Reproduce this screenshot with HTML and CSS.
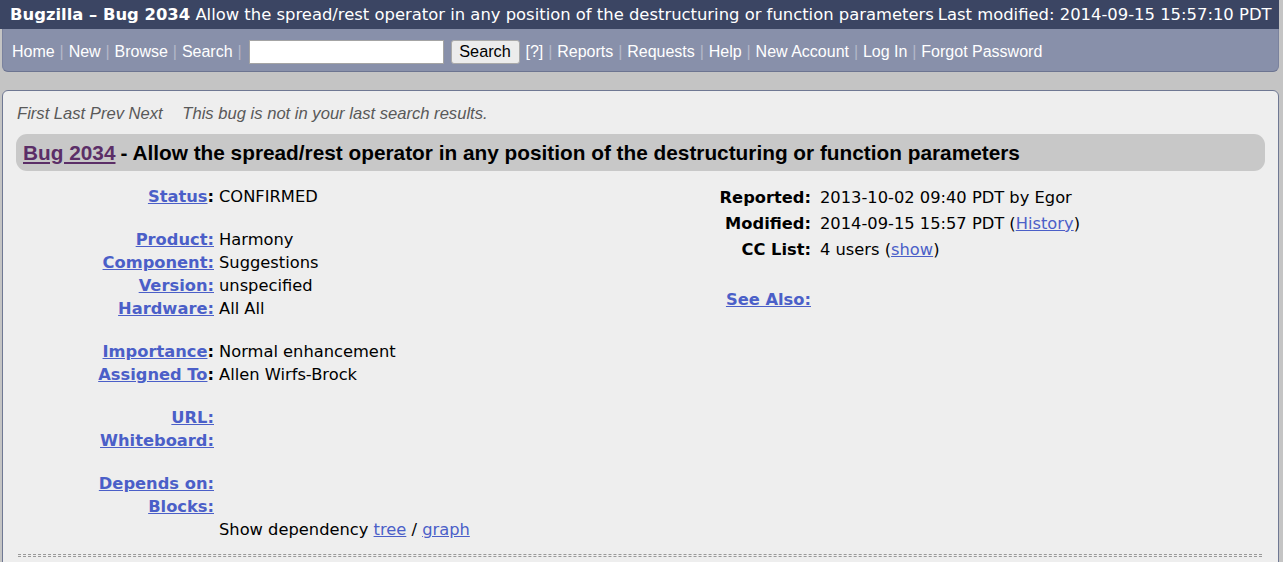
FILE: index.html
```html
<!DOCTYPE html>
<html>
<head>
<meta charset="utf-8">
<title>Bug 2034</title>
<link rel="stylesheet" href="styles.css">
</head>
<body>
<div class="page">
  <div class="topbar">
    <span class="tb-title"><b>Bugzilla – Bug 2034</b> Allow the spread/rest operator in any position of the destructuring or function parameters</span>
    <span class="tb-mod">Last modified: 2014-09-15 15:57:10 PDT</span>
  </div>
  <div class="navbar">
    <a href="#">Home</a><span class="sep">|</span><a href="#">New</a><span class="sep">|</span><a href="#">Browse</a><span class="sep">|</span><a href="#">Search</a><span class="sep">|</span>
    <input class="q" type="text">
    <button class="btn">Search</button>
    <a href="#" class="help">[?]</a><span class="sep">|</span><a href="#">Reports</a><span class="sep">|</span><a href="#">Requests</a><span class="sep">|</span><a href="#">Help</a><span class="sep">|</span><a href="#">New Account</a><span class="sep">|</span><a href="#">Log In</a><span class="sep">|</span><a href="#">Forgot Password</a>
  </div>
  <div class="main">
    <div class="navline">First Last Prev Next <span class="notin">This bug is not in your last search results.</span></div>
    <div class="titlebar"><a href="#" class="buglink">Bug 2034</a> - Allow the spread/rest operator in any position of the destructuring or function parameters</div>
    <div class="fields">
      <div class="leftf">
        <div class="row"><span class="lbl"><a href="#">Status</a>:</span><span class="val">CONFIRMED</span></div>
        <div class="spacer"></div>
        <div class="row"><span class="lbl"><a href="#">Product:</a></span><span class="val">Harmony</span></div>
        <div class="row"><span class="lbl"><a href="#">Component:</a></span><span class="val">Suggestions</span></div>
        <div class="row"><span class="lbl"><a href="#">Version:</a></span><span class="val">unspecified</span></div>
        <div class="row"><span class="lbl"><a href="#">Hardware:</a></span><span class="val">All All</span></div>
        <div class="spacer"></div>
        <div class="row"><span class="lbl"><a href="#">Importance</a>:</span><span class="val">Normal enhancement</span></div>
        <div class="row"><span class="lbl"><a href="#">Assigned To</a>:</span><span class="val">Allen Wirfs-Brock</span></div>
        <div class="spacer"></div>
        <div class="row"><span class="lbl"><a href="#">URL:</a></span><span class="val"></span></div>
        <div class="row"><span class="lbl"><a href="#">Whiteboard:</a></span><span class="val"></span></div>
        <div class="spacer"></div>
        <div class="row"><span class="lbl"><a href="#">Depends on:</a></span><span class="val"></span></div>
        <div class="row"><span class="lbl"><a href="#">Blocks:</a></span><span class="val"></span></div>
        <div class="row"><span class="lbl"></span><span class="val">Show dependency <a href="#" class="plain">tree</a> / <a href="#" class="plain">graph</a></span></div>
      </div>
      <div class="rightf">
        <div class="rrow"><span class="rlbl">Reported:</span><span class="rval">2013-10-02 09:40 PDT by Egor</span></div>
        <div class="rrow"><span class="rlbl">Modified:</span><span class="rval">2014-09-15 15:57 PDT (<a href="#" class="plain">History</a>)</span></div>
        <div class="rrow"><span class="rlbl">CC List:</span><span class="rval">4 users (<a href="#" class="plain">show</a>)</span></div>
        <div class="rspacer"></div>
        <div class="rrow"><span class="rlbl"><a href="#">See Also:</a></span><span class="rval"></span></div>
      </div>
    </div>
    <div class="dashline"></div>
  </div>
</div>
</body>
</html>
```

FILE: styles.css
```css
html, body {
  margin: 0;
  padding: 0;
  background: #c4c4c4;
  height: 100%;
  overflow: hidden;
}
.page {
  margin-right: 4px;
}
.topbar {
  background: #3b4563;
  color: #fff;
  height: 29px;
  display: flex;
  align-items: center;
  gap: 4px;
  padding: 0 0 0 10px;
  font-family: "DejaVu Sans", Verdana, sans-serif;
  font-size: 16.4px;
  white-space: nowrap;
  overflow: hidden;
}
.tb-title b {
  font-weight: bold;
}
.navbar {
  margin-left: 2px;
  background: #8890aa;
  border-bottom: 1px solid #6c7490;
  border-left: 1px solid #7a829e;
  border-right: 1px solid #7a829e;
  border-radius: 0 0 6px 6px;
  height: 43px;
  box-sizing: border-box;
  padding-top: 3px;
  display: flex;
  align-items: center;
  padding-left: 9px;
  font-family: "Liberation Sans", Arial, sans-serif;
  font-size: 16px;
  white-space: nowrap;
}
.navbar a {
  color: #fff;
  text-decoration: none;
}
.navbar .sep {
  color: #b3b8c9;
  padding: 0 4.9px;
}
.navbar .q {
  width: 195px;
  height: 24px;
  box-sizing: border-box;
  border: 1px solid #a4a4a4;
  background: #fff;
  margin: 0 3px 0 2px;
  padding: 0;
}
.navbar .btn {
  height: 24px;
  width: 69px;
  box-sizing: border-box;
  border: 1px solid #a9a9a9;
  border-radius: 3px;
  background: #ececec;
  font-family: "Liberation Sans", Arial, sans-serif;
  font-size: 16.3px;
  color: #000;
  margin: 0 6px 0 4px;
  padding: 0;
}
.main {
  margin-top: 18px;
  margin-left: 2px;
  background: #eeeeee;
  border: 1px solid #6f7893;
  border-radius: 6px 6px 0 0;
  padding: 13px 13px 0 13px;
  min-height: 600px;
}
.navline {
  font-family: "Liberation Sans", Arial, sans-serif;
  font-style: italic;
  font-size: 16.6px;
  line-height: 20px;
  color: #595959;
  padding-left: 1px;
}
.navline .notin {
  margin-left: 15px;
}
.titlebar {
  margin-top: 10px;
  background: #c8c8c8;
  border-radius: 11px;
  height: 37px;
  display: flex;
  align-items: center;
  padding-left: 7px;
  font-family: "Liberation Sans", Arial, sans-serif;
  font-weight: bold;
  font-size: 20.8px;
  color: #000;
  white-space: nowrap;
}
.titlebar .buglink {
  color: #5b2e67;
  text-decoration: underline;
  margin-right: 5px;
}
.fields {
  margin-top: 14px;
  display: flex;
  font-family: "DejaVu Sans", Verdana, sans-serif;
  font-size: 16.3px;
  color: #000;
}
.leftf {
  width: 683px;
}
.row {
  display: flex;
  height: 23px;
  line-height: 23px;
  white-space: nowrap;
}
.lbl {
  width: 198px;
  text-align: right;
  font-weight: bold;
}
.val {
  padding-left: 5px;
}
.spacer {
  height: 20px;
}
a {
  color: #4b5fc8;
  text-decoration: underline;
}
.rightf {
  flex: 1;
}
.rrow {
  display: flex;
  height: 26px;
  line-height: 26px;
  white-space: nowrap;
}
.rlbl {
  width: 112px;
  text-align: right;
  font-weight: bold;
}
.rval {
  padding-left: 9px;
}
.rspacer {
  height: 24px;
}
.dashline {
  margin-top: 13px;
  height: 1px;
  border-top: 1px dashed #9a9a9a;
  border-bottom: 1px dashed #9a9a9a;
  margin-left: 2px;
  margin-right: 3px;
}
```
